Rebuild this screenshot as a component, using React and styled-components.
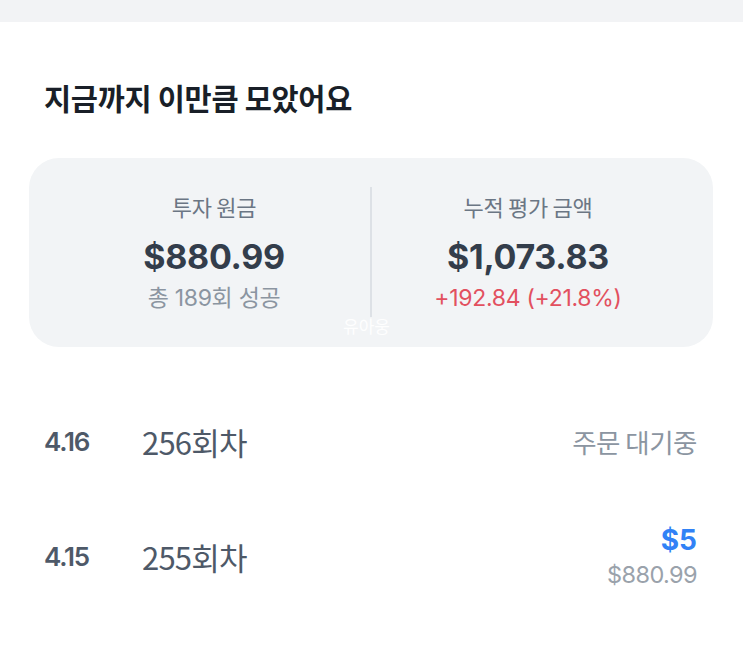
import React from 'react';
import styled, { createGlobalStyle } from 'styled-components';

const GlobalStyle = createGlobalStyle`
    html, body {
        margin: 0;
        padding: 0;
        background: #ffffff;
        font-family: 'Noto Sans CJK KR', 'Noto Sans', sans-serif;
    }
`;

const Page = styled.div`
    width: 743px;
    height: 648px;
    overflow: hidden;
    background: #ffffff;
`;

const TopBar = styled.div`
    height: 22px;
    background: #f2f3f5;
`;

const Title = styled.h2`
    margin: 0;
    padding: 54px 0 0 44px;
    font-size: 29.5px;
    font-weight: 700;
    line-height: 42px;
    color: #191f28;
    letter-spacing: -0.3px;
`;

const SummaryCard = styled.div`
    position: relative;
    display: flex;
    align-items: stretch;
    margin: 40px 30px 0 29px;
    height: 189px;
    padding: 0 29px;
    box-sizing: border-box;
    background: #f2f4f6;
    border-radius: 30px;
`;

const SummaryColumn = styled.div`
    flex: 1;
    display: flex;
    flex-direction: column;
    align-items: center;
    padding-top: 31px;
`;

const Divider = styled.div`
    width: 2px;
    margin: 29px 0 30px;
    background: #dde1e6;
`;

const Label = styled.div`
    font-size: 22px;
    line-height: 34px;
    color: #6b7684;
    letter-spacing: -0.3px;
`;

const Amount = styled.div`
    margin-top: 12px;
    font-family: 'Inter', 'Noto Sans CJK KR', sans-serif;
    font-size: 34px;
    font-weight: 700;
    line-height: 44px;
    color: #333d4b;
    letter-spacing: -0.3px;
`;

const SubText = styled.div`
    margin-top: 4px;
    font-family: 'Inter', 'Noto Sans CJK KR', sans-serif;
    font-size: 23px;
    line-height: 30px;
    color: ${({ $tone }) => ($tone === 'red' ? '#e2505f' : '#8b95a1')};
    letter-spacing: -0.3px;
`;

const Watermark = styled.div`
    position: absolute;
    left: 314px;
    top: 155px;
    font-size: 17px;
    color: rgba(255, 255, 255, 0.95);
`;

const RoundList = styled.ul`
    list-style: none;
    margin: 48px 0 0;
    padding: 0 46px 0 44px;
`;

const RoundRow = styled.li`
    display: flex;
    align-items: center;
    height: 92px;
    & + & {
        margin-top: 23px;
    }
`;

const RoundDate = styled.span`
    width: 98px;
    font-family: 'Inter', 'Noto Sans CJK KR', sans-serif;
    font-size: 26px;
    font-weight: 600;
    color: #4e5968;
    letter-spacing: -1.2px;
`;

const RoundName = styled.span`
    flex: 1;
    font-size: 31px;
    color: #4e5968;
    letter-spacing: -0.8px;
`;

const RoundStatus = styled.div`
    display: flex;
    flex-direction: column;
    align-items: flex-end;
`;

const StatusText = styled.span`
    font-size: 26.5px;
    color: #8b95a1;
    letter-spacing: -0.5px;
`;

const OrderAmount = styled.span`
    font-family: 'Inter', 'Noto Sans CJK KR', sans-serif;
    font-size: 28px;
    font-weight: 700;
    line-height: 36px;
    color: #3182f6;
`;

const OrderTotal = styled.span`
    margin-top: 2px;
    font-family: 'Inter', 'Noto Sans CJK KR', sans-serif;
    font-size: 23.5px;
    line-height: 30px;
    color: #9aa2ab;
    letter-spacing: -0.6px;
`;

const rounds = [
    { date: '4.16', name: '256회차', pending: true },
    { date: '4.15', name: '255회차', amount: '$5', total: '$880.99' },
];

export default function App() {
    return (
        <Page>
            <GlobalStyle />
            <TopBar />
            <Title>지금까지 이만큼 모았어요</Title>
            <SummaryCard>
                <SummaryColumn>
                    <Label>투자 원금</Label>
                    <Amount>$880.99</Amount>
                    <SubText>총 189회 성공</SubText>
                </SummaryColumn>
                <Divider />
                <SummaryColumn>
                    <Label>누적 평가 금액</Label>
                    <Amount>$1,073.83</Amount>
                    <SubText $tone="red">+192.84 (+21.8%)</SubText>
                </SummaryColumn>
                <Watermark>유아웅</Watermark>
            </SummaryCard>
            <RoundList>
                {rounds.map((round) => (
                    <RoundRow key={round.date}>
                        <RoundDate>{round.date}</RoundDate>
                        <RoundName>{round.name}</RoundName>
                        <RoundStatus>
                            {round.pending ? (
                                <StatusText>주문 대기중</StatusText>
                            ) : (
                                <>
                                    <OrderAmount>{round.amount}</OrderAmount>
                                    <OrderTotal>{round.total}</OrderTotal>
                                </>
                            )}
                        </RoundStatus>
                    </RoundRow>
                ))}
            </RoundList>
        </Page>
    );
}
